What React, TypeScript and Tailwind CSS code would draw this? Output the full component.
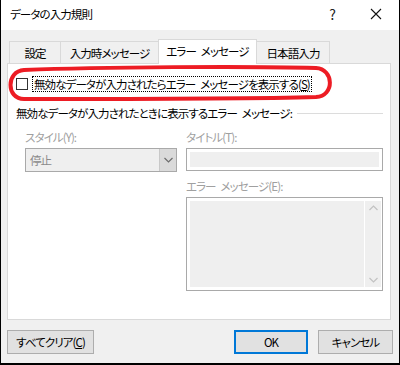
import React from "react";

const font = {
  fontFamily: '"Noto Sans CJK JP", "Noto Sans", sans-serif',
};

const SP = "\u2002";

function Chevron({ up, color }: { up?: boolean; color: string }) {
  return (
    <svg width="9" height="6" viewBox="0 0 9 6">
      <path
        d={up ? "M0.5 5 L4.5 1 L8.5 5" : "M0.5 1 L4.5 5 L8.5 1"}
        fill="none"
        stroke={color}
        strokeWidth="1.2"
      />
    </svg>
  );
}

export default function App() {
  return (
    <div
      className="relative w-[400px] h-[365px] bg-[#f0f0f0] border-l border-r border-b-2 border-black flex flex-col text-[11.5px] leading-[16px] tracking-[-0.9px] text-black [font-feature-settings:'palt']"
      style={font}
    >
      {/* Title bar */}
      <div className="h-[30px] bg-white flex items-center pl-[9px] shrink-0">
        <span className="mt-[-2px]">データの入力規則</span>
        <span className="ml-auto mr-[34px] text-[14px] tracking-normal text-[#222] mt-[-2px]">?</span>
        <svg width="12" height="12" viewBox="0 0 12 12" className="mr-[17px] mt-[-2px]">
          <path d="M1 1 L11 11 M11 1 L1 11" stroke="#111" strokeWidth="1.1" />
        </svg>
      </div>

      {/* Body */}
      <div className="flex flex-col pl-[6px] pr-[6px] pt-[9px]">
        {/* Tabs */}
        <div className="flex items-end h-[24px] pl-[2px]">
          <div className="w-[52px] h-[22px] border border-b-0 border-[#d9d9d9] flex items-center justify-center">
            設定
          </div>
          <div className="w-[98px] h-[22px] border-t border-r border-[#d9d9d9] flex items-center justify-center">
            入力時メッセージ
          </div>
          <div className="relative z-10 w-[99px] ml-[-1px] mb-[-1px] h-[25px] border border-b-0 border-[#d9d9d9] bg-white flex items-center justify-center pb-[2px]">
            {`エラー${SP}メッセージ`}
          </div>
          <div className="w-[73px] h-[22px] border-t border-r border-[#d9d9d9] flex items-center justify-center">
            日本語入力
          </div>
        </div>

        {/* Panel */}
        <div className="w-[384px] h-[257px] border border-[#d9d9d9] bg-white flex flex-col pl-[8px] pt-[12px]">
          {/* checkbox row */}
          <div className="flex items-center h-[16px]">
            <div className="w-[12px] h-[12px] border border-[#333] bg-white" />
            <div className="ml-[4px] h-[16px] px-[1px] border border-dotted border-black flex items-center">
              {`無効なデータが入力されたらエラー${SP}メッセージを表示する(`}
              <span className="underline">S</span>)
            </div>
          </div>

          {/* heading */}
          <div className="flex items-center mt-[13px] h-[16px] pr-[7px]">
            <span>{`無効なデータが入力されたときに表示するエラー${SP}メッセージ:`}</span>
            <div className="flex-1 h-px bg-[#dcdcdc] ml-[5px]" />
          </div>

          {/* columns */}
          <div className="flex mt-[8px]">
            <div className="ml-[9px] w-[152px] flex flex-col">
              <div className="h-[16px] text-[#a0a0a0]">スタイル(Y):</div>
              <div className="mt-[3px] h-[24px] border border-[#a9a9a9] bg-[#efefef] flex">
                <div className="flex-1 flex items-center pl-[4px] text-[#8a8a8a]">停止</div>
                <div className="w-[17px] bg-[#dadada] border-l border-[#c8c8c8] flex items-center justify-center">
                  <Chevron color="#6d6d6d" />
                </div>
              </div>
            </div>
            <div className="ml-[9px] w-[197px] flex flex-col">
              <div className="h-[16px] text-[#a0a0a0]">タイトル(T):</div>
              <div className="mt-[3px] h-[23px] border border-[#a9a9a9] bg-white p-[3px]">
                <div className="w-full h-full bg-[#efefef]" />
              </div>
              <div className="mt-[7px] h-[16px] text-[#a0a0a0]">{`エラー${SP}メッセージ(E):`}</div>
              <div className="mt-[3px] h-[94px] border border-[#a9a9a9] bg-white p-[3px] pr-[1px] flex">
                <div className="flex-1 h-full bg-[#efefef]" />
                <div className="w-[16px] ml-[1px] h-full bg-[#efefef] flex flex-col items-center justify-between py-[4px]">
                  <Chevron up color="#c2c2c2" />
                  <Chevron color="#c2c2c2" />
                </div>
              </div>
            </div>
          </div>
        </div>

        {/* Buttons */}
        <div className="flex mt-[10px] h-[24px]">
          <div className="w-[87px] h-[24px] border border-[#adadad] bg-[#e1e1e1] flex items-center justify-center">
            すべてクリア(<span className="underline">C</span>)
          </div>
          <div className="ml-auto w-[74px] h-[24px] border-2 border-[#0078d7] bg-[#e1e1e1] flex items-center justify-center">
            OK
          </div>
          <div className="ml-[10px] w-[75px] h-[24px] border border-[#adadad] bg-[#e1e1e1] flex items-center justify-center">
            キャンセル
          </div>
        </div>
      </div>

      {/* Red annotation */}
      <svg
        className="absolute left-[-1px] top-0 pointer-events-none"
        width="400"
        height="365"
        viewBox="0 0 400 365"
      >
        <path
          d="M24 70 C 100 67, 250 66, 316 68 C 334 69, 335 96, 316 97 C 250 99, 100 99, 24 99 C 6 99, 6 71, 24 70 Z"
          fill="none"
          stroke="#ed1c24"
          strokeWidth="4"
        />
      </svg>
    </div>
  );
}
